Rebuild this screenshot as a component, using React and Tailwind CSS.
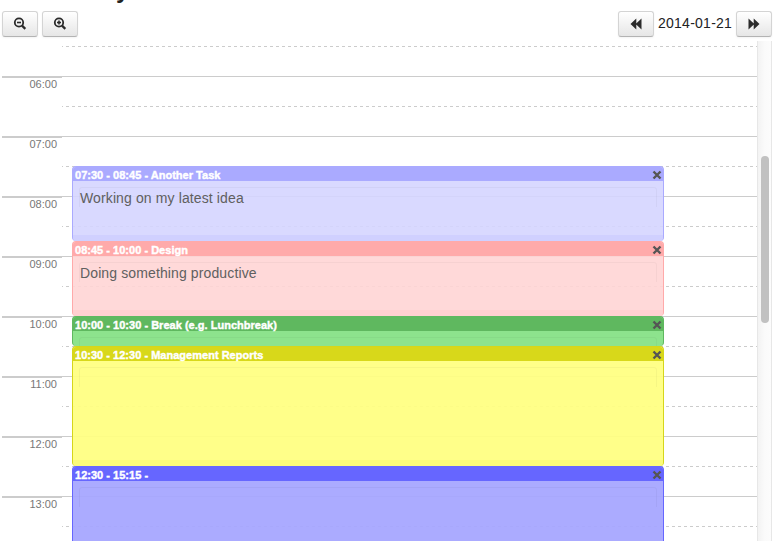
import React from "react";

const hours = ["06:00", "07:00", "08:00", "09:00", "10:00", "11:00", "12:00", "13:00"];

const dash = "h-px bg-[repeating-linear-gradient(90deg,#ccc_0,#ccc_1px,transparent_1px,transparent_4px,#ccc_4px,#ccc_6px)]";

const events = [
  { title: "07:30 - 08:45 - Another Task", text: "Working on my latest idea", box: "h-[75px] border-[#aaaaff] bg-[#d5d5ff]/90", head: "bg-[#aaaaff]", foot: "bg-[#ccccff]/70" },
  { title: "08:45 - 10:00 - Design", text: "Doing something productive", box: "h-[75px] border-[#ffaaaa] bg-[#ffd5d5]/90", head: "bg-[#ffaaaa]", foot: "bg-[#ffcccc]/70" },
  { title: "10:00 - 10:30 - Break (e.g. Lunchbreak)", text: "", box: "h-[30px] border-[#5fb85f] bg-[#84e184]/93", head: "bg-[#5fb85f]", foot: "bg-[#7dda7d]/60" },
  { title: "10:30 - 12:30 - Management Reports", text: "", box: "h-[120px] border-[#d6d61a] bg-[#ffff80]/93", head: "bg-[#d8d81a]", foot: "bg-[#f8f870]/60" },
  { title: "12:30 - 15:15 -", text: "", box: "h-[165px] border-[#6666ff] bg-[#a5a5ff]/93", head: "bg-[#6666ff]", foot: "bg-[#9f9fff]/60" },
];

function Button({ children }) {
  return (
    <button className="flex h-[26px] w-9 items-center justify-center rounded-[3px] border border-[#d4d4d4] border-b-[#b3b3b3] bg-linear-to-b from-white to-[#e6e6e6] shadow-[0_1px_2px_rgba(0,0,0,0.05)]">
      {children}
    </button>
  );
}

function Magnifier({ plus }) {
  return (
    <svg width="14" height="14" viewBox="0 0 14 14" fill="none" stroke="#2b2b2b">
      <circle cx="6" cy="5.5" r="4.2" strokeWidth="1.8" />
      <path d="M9 8.7l3.3 3.2" strokeWidth="2.3" />
      <path d="M4 5.5h4" strokeWidth="1.6" />
      {plus && <path d="M6 3.5v4" strokeWidth="1.6" />}
    </svg>
  );
}

function Skip({ forward }) {
  return (
    <svg width="12" height="12" viewBox="0 0 12 12" fill="#2b2b2b" className={forward ? "-scale-x-100" : ""}>
      <path d="M6.3.5v11L.5 6zM11.5.5v11L5.7 6z" />
    </svg>
  );
}

function Event({ event }) {
  return (
    <div className={`flex flex-col overflow-hidden rounded-[4px] border border-b-0 ${event.box}`}>
      <div className={`flex h-[14px] shrink-0 items-start justify-between pr-px pl-[2px] text-[11px] font-bold text-white ${event.head}`}>
        <span className="pt-px leading-[15px] tracking-[0.02px] whitespace-nowrap [-webkit-text-stroke:0.4px_white]">{event.title}</span>
        <svg width="10" height="10" viewBox="0 0 10 10" className="mt-[3px]">
          <path d="M1.5 1.5l7 7M8.5 1.5l-7 7" stroke="#555" strokeWidth="2.4" />
        </svg>
      </div>
      <div className="mx-[6px] mt-[6px] h-[20px] shrink-0 rounded-t-[3px] border border-b-0 border-black/[0.035] text-[14px] leading-[20px] tracking-[0.12px] text-[#606060]">
        {event.text}
      </div>
      <div className={`mt-auto h-[6px] shrink-0 ${event.foot}`} />
    </div>
  );
}

export default function App() {
  return (
    <div className="h-[554px] w-[783px] overflow-hidden bg-white font-['Liberation_Sans',Arial,sans-serif]">
      <header className="relative flex h-[41px] w-[772px] items-start justify-between pt-[11px] pl-[2px]">
        <h1 className="absolute top-[-24px] left-[116px] text-[24px] leading-[28px] font-bold text-[#222]">y</h1>
        <div className="flex gap-1">
          <Button><Magnifier /></Button>
          <Button><Magnifier plus /></Button>
        </div>
        <div className="flex">
          <Button><Skip /></Button>
          <span className="w-[82px] pl-1 text-[14px] leading-[24px] tracking-[0.25px] text-[#222]">2014-01-21</span>
          <Button><Skip forward /></Button>
        </div>
      </header>

      <main className="flex h-[500px] w-[772px] overflow-hidden pl-[2px]">
        <div className="relative w-[755px]">
          <div className="pt-[5px]">
            <div className={`ml-[60px] ${dash}`} />
            <div className="h-[29px]" />
            {hours.map((hour) => (
              <div key={hour} className="flex h-[60px]">
                <div className="w-[60px] pt-[2px] pr-[5px] text-right text-[11px] leading-[13px] text-[#777] shadow-[inset_0_2px_0_#ccc]">{hour}</div>
                <div className="flex-1 border-t border-[#ccc]">
                  <div className={`mt-[29px] ${dash}`} />
                </div>
              </div>
            ))}
          </div>
          <div className="absolute top-[125px] left-[70px] w-[592px]">
            {events.map((event) => <Event key={event.title} event={event} />)}
          </div>
        </div>
        <div className="w-[15px] border-x border-[#e7e7e7] bg-linear-to-r from-[#f3f3f3] via-[#fafafa] to-[#fcfcfc] pt-[115px] pl-[3px]">
          <div className="h-[167px] w-2 rounded-full bg-[#c1c1c1]" />
        </div>
      </main>
    </div>
  );
}
